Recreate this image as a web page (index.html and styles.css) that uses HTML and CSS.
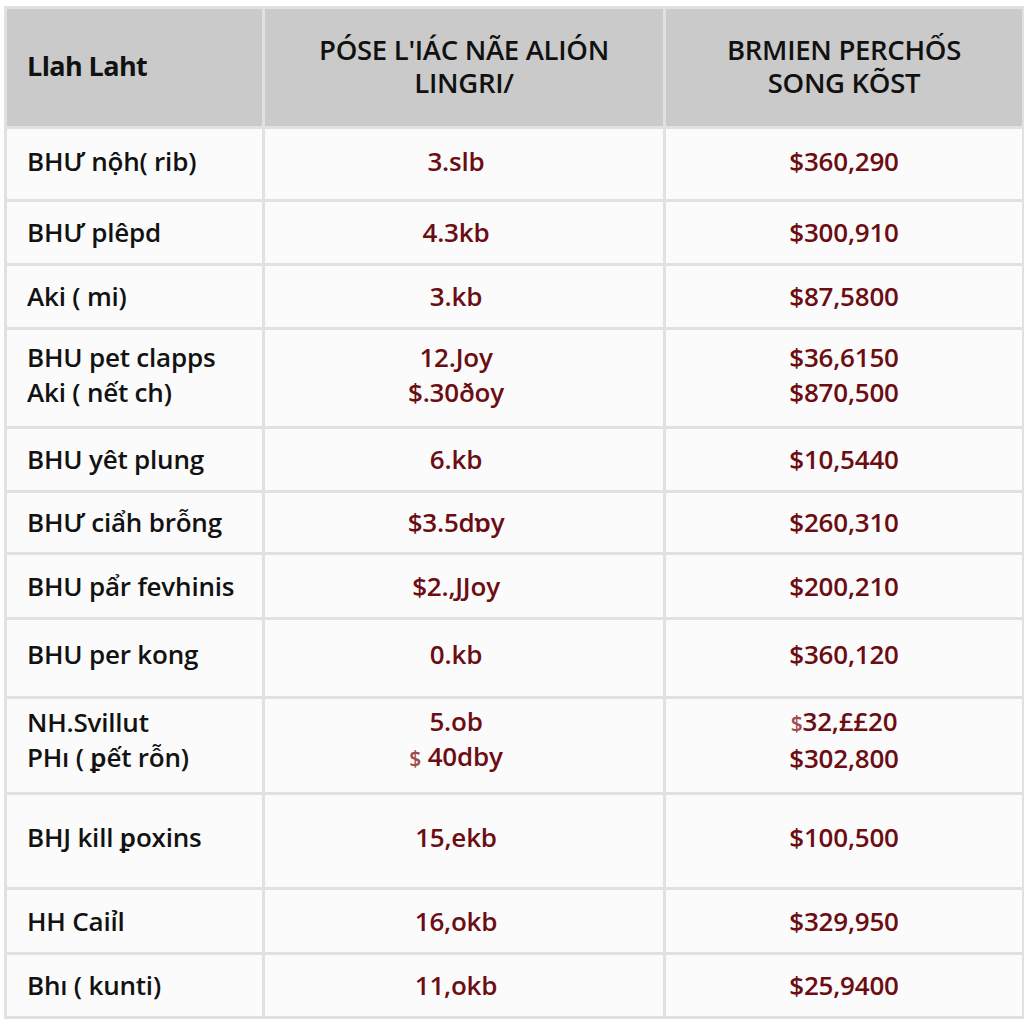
FILE: index.html
```html
<!DOCTYPE html>
<html lang="vi">
<head>
<meta charset="utf-8">
<link rel="stylesheet" href="styles.css">
</head>
<body>
<table class="price-table">
  <colgroup>
    <col class="c-name">
    <col class="c-size">
    <col class="c-cost">
  </colgroup>
  <thead>
    <tr>
      <th class="name">Llah Laht</th>
      <th class="size"><span class="hl">PÓSE L'IÁC NÃE ALIÓN</span><span class="hl">LINGRI/</span></th>
      <th class="cost"><span class="hl">BRMIEN PERCHỐS</span><span class="hl">SONG KÕST</span></th>
    </tr>
  </thead>
  <tbody>
    <tr class="r1"><td class="name">BHƯ nộh( rib)</td><td class="size">3.slb</td><td class="cost">$360,290</td></tr>
    <tr class="r2"><td class="name">BHƯ plêpd</td><td class="size">4.3kb</td><td class="cost">$300,910</td></tr>
    <tr class="r3"><td class="name">Aki ( mi)</td><td class="size">3.kb</td><td class="cost">$87,5800</td></tr>
    <tr class="r4"><td class="name">BHU pet clapps<br>Aki ( nết ch)</td><td class="size">12.Joy<br>$.30ðoy</td><td class="cost">$36,6150<br>$870,500</td></tr>
    <tr class="r5"><td class="name">BHU yêt plung</td><td class="size">6.kb</td><td class="cost">$10,5440</td></tr>
    <tr class="r6"><td class="name">BHƯ ciẩh brỗng</td><td class="size">$3.5dɒy</td><td class="cost">$260,310</td></tr>
    <tr class="r7"><td class="name">BHU pẩr fevhinis</td><td class="size">$2.,JJoy</td><td class="cost">$200,210</td></tr>
    <tr class="r8"><td class="name">BHU per kong</td><td class="size">0.kb</td><td class="cost">$360,120</td></tr>
    <tr class="r9"><td class="name">NH.Svillut<br>PHı ( ꝑết rỗn)</td><td class="size">5.ob<br><span class="faint">$</span> 40dby</td><td class="cost"><span class="faint">$</span>32,££20<br>$302,800</td></tr>
    <tr class="r10"><td class="name">BHJ kill ꝑoxins</td><td class="size">15,ekb</td><td class="cost">$100,500</td></tr>
    <tr class="r11"><td class="name">HH Caiỉl</td><td class="size">16,okb</td><td class="cost">$329,950</td></tr>
    <tr class="r12"><td class="name">Bhı ( kunti)</td><td class="size">11,okb</td><td class="cost">$25,9400</td></tr>
  </tbody>
</table>
</body>
</html>
```
FILE: styles.css
```css
html, body {
  margin: 0;
  padding: 0;
  background: #ffffff;
}

body {
  padding: 6px 0 0 4px;
  font-family: "Open Sans", "Noto Sans", "DejaVu Sans", sans-serif;
}

.price-table {
  border-collapse: collapse;
  table-layout: fixed;
  width: 1018px;
  border: 3px solid #e1e1e1;
}

.c-name { width: 258px; }
.c-size { width: 401px; }
.c-cost { width: 359px; }

.price-table th,
.price-table td {
  border: 3px solid #e1e1e1;
  padding: 0;
  vertical-align: middle;
}

.price-table th {
  background: #cacaca;
  height: 113px;
  padding-bottom: 4px;
  color: #111111;
  font-weight: 600;
  font-size: 27.5px;
  line-height: 33px;
  letter-spacing: -0.3px;
}

.hl {
  display: block;
  height: 33px;
}

.price-table th.name {
  text-align: left;
  padding-left: 20px;
  font-weight: 700;
  font-size: 27px;
  letter-spacing: -0.6px;
}

.price-table th.size,
.price-table th.cost {
  text-align: center;
}

.price-table td {
  background: #fbfbfb;
  font-weight: 600;
  font-size: 26px;
  line-height: 35px;
  letter-spacing: -0.2px;
}

.price-table td.name {
  color: #121212;
  padding-left: 20px;
  text-align: left;
}

.price-table td.size {
  color: #6c0d13;
  text-align: center;
  padding-right: 16px;
}

.price-table td.cost {
  color: #6c0d13;
  text-align: center;
}

.faint { color: #a04a4e; font-size: 21px; }

.r1 td { height: 65px; padding-bottom: 5px; }
.r2 td { height: 61px; }
.r3 td { height: 61px; }
.r4 td { height: 89px; padding-bottom: 7px; }
.r5 td { height: 61px; }
.r6 td { height: 59px; }
.r7 td { height: 62px; }
.r8 td { height: 68px; padding-bottom: 8px; }
.r9 td { height: 82px; padding-bottom: 11px; }
.r10 td { height: 84px; padding-bottom: 8px; }
.r11 td { height: 62px; }
.r12 td { height: 61px; }
```
